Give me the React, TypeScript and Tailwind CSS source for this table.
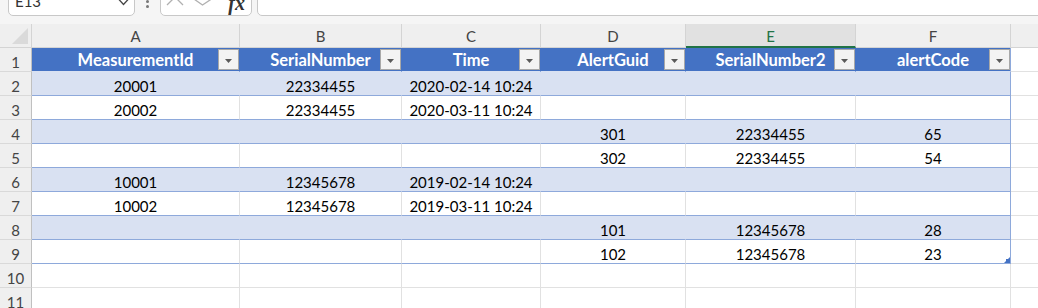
import React from 'react';

const rows: string[][] = [
  ['20001', '22334455', '2020-02-14 10:24', '', '', ''],
  ['20002', '22334455', '2020-03-11 10:24', '', '', ''],
  ['', '', '', '301', '22334455', '65'],
  ['', '', '', '302', '22334455', '54'],
  ['10001', '12345678', '2019-02-14 10:24', '', '', ''],
  ['10002', '12345678', '2019-03-11 10:24', '', '', ''],
  ['', '', '', '101', '12345678', '28'],
  ['', '', '', '102', '12345678', '23'],
];

const headers = ['MeasurementId', 'SerialNumber', 'Time', 'AlertGuid', 'SerialNumber2', 'alertCode'];
const letters = ['A', 'B', 'C', 'D', 'E', 'F'];

function FilterButton() {
  return (
    <div className="absolute right-0 top-[1px] flex h-[21px] w-[21px] items-center justify-center border border-[#a8a8a8] bg-[#f3f3f3]">
      <svg width="7" height="4" viewBox="0 0 7 4" className="mt-[2px]">
        <polygon points="0,0 7,0 3.5,4" fill="#5a5a5a" />
      </svg>
    </div>
  );
}

function RowHeader({ n }: { n: number }) {
  return (
    <div className="flex items-end justify-center border-b border-r border-b-[#d9d9d9] border-r-[#c0c0c0] bg-[#efefef] text-[15px] leading-[18px] text-[#444]">
      {n}
    </div>
  );
}

export default function App() {
  return (
    <div className="h-[308px] w-[1038px] overflow-hidden bg-white font-[family-name:Lato,sans-serif]">
      {/* formula bar */}
      <div className="flex h-[16px] items-end overflow-hidden bg-[#f5f5f5]">
        <div className="ml-[8px] flex h-[30px] w-[127px] shrink-0 items-end rounded-[5px] border border-[#c8c8c8] bg-white pb-[5px] pl-[6px] pr-[5px]">
          <span className="text-[15px] leading-[18px] text-[#333]">E13</span>
          <svg width="12" height="10" viewBox="0 0 12 10" overflow="visible" className="ml-auto">
            <polyline points="1.5,-1 6.5,4.5 11.5,-1" fill="none" stroke="#444" strokeWidth="1.3" />
          </svg>
        </div>
        <div className="mb-[8px] ml-[11px] flex shrink-0 flex-col gap-[2px]">
          <div className="h-[3px] w-[3px] rounded-full bg-[#777]" />
          <div className="h-[3px] w-[3px] rounded-full bg-[#777]" />
          <div className="h-[3px] w-[3px] rounded-full bg-[#777]" />
        </div>
        <div className="ml-[11px] flex h-[30px] w-[92px] shrink-0 items-end rounded-[5px] border border-[#c8c8c8] bg-white">
          <svg width="58" height="28" viewBox="0 0 58 28" className="shrink-0">
            <line x1="6" y1="2" x2="22" y2="18" stroke="#b0b0b0" strokeWidth="1.3" />
            <line x1="22" y1="2" x2="6" y2="18" stroke="#b0b0b0" strokeWidth="1.3" />
            <polyline points="31.5,11 41.5,18 52,11" fill="none" stroke="#b0b0b0" strokeWidth="1.3" />
          </svg>
          <span className="mb-[2px] ml-auto mr-[6px] font-[family-name:'Liberation_Serif',serif] text-[20px] font-bold italic leading-[20px] text-[#333]">
            fx
          </span>
        </div>
        <div className="-mr-[10px] ml-[5px] h-[30px] flex-1 rounded-[5px] border border-[#c8c8c8] bg-white" />
      </div>
      <div className="h-[8px] bg-[#f5f5f5]" />

      {/* grid */}
      <div className="grid auto-rows-[24px] grid-cols-[32px_208px_162px_139px_145px_170px_155px_1fr]">
        {/* column header row */}
        <div className="flex items-end justify-end border-b border-r border-[#d4d4d4] bg-[#efefef] pb-[3px] pr-[3px]">
          <svg width="16" height="16" viewBox="0 0 16 16">
            <polygon points="16,0 16,16 0,16" fill="#dadada" />
          </svg>
        </div>
        {letters.map((l) =>
          l === 'E' ? (
            <div
              key={l}
              className="flex items-center justify-center border-b-2 border-r border-b-[#217346] border-r-[#d4d4d4] bg-[#e1e1e1] pt-[1px] text-[15px] leading-[18px] text-[#217346]"
            >
              {l}
            </div>
          ) : (
            <div
              key={l}
              className="flex items-center justify-center border-b border-r border-[#d4d4d4] bg-[#efefef] text-[15px] leading-[18px] text-[#444]"
            >
              {l}
            </div>
          )
        )}
        <div className="border-b border-[#d4d4d4] bg-[#efefef]" />

        {/* row 1: table header */}
        <RowHeader n={1} />
        {headers.map((h, i) => (
          <div
            key={h}
            className={
              i === 5
                ? 'relative flex items-center justify-center whitespace-nowrap border-b border-r border-b-[#d9e1f2] border-r-[#8ea9db] bg-[#4472c4] text-[16.5px] font-bold leading-[18px] text-white'
                : 'relative flex items-center justify-center whitespace-nowrap border-b border-r border-b-[#d9e1f2] border-r-[#4472c4] bg-[#4472c4] text-[16.5px] font-bold leading-[18px] text-white'
            }
          >
            {h}
            <FilterButton />
          </div>
        ))}
        <div className="border-b border-[#e1e1e1] bg-white" />

        {/* data rows */}
        {rows.map((r, ri) => {
          const band = ri % 2 === 0;
          const last = ri === rows.length - 1;
          return (
            <React.Fragment key={ri}>
              <RowHeader n={ri + 2} />
              {r.map((v, ci) => {
                let cls: string;
                if (band) {
                  cls =
                    ci === 5
                      ? 'relative flex items-end justify-center whitespace-nowrap border-b border-r border-b-[#8ea9db] border-r-[#8ea9db] bg-[#d9e1f2] text-[15px] leading-[18px] text-black'
                      : 'relative flex items-end justify-center whitespace-nowrap border-b border-r border-b-[#8ea9db] border-r-[#d9e1f2] bg-[#d9e1f2] text-[15px] leading-[18px] text-black';
                } else {
                  cls =
                    ci === 5
                      ? 'relative flex items-end justify-center whitespace-nowrap border-b border-r border-b-[#8ea9db] border-r-[#8ea9db] bg-white text-[15px] leading-[18px] text-black'
                      : 'relative flex items-end justify-center whitespace-nowrap border-b border-r border-b-[#8ea9db] border-r-[#e1e1e1] bg-white text-[15px] leading-[18px] text-black';
                }
                return (
                  <div key={ci} className={cls}>
                    {v}
                    {last && ci === 5 && (
                      <svg width="6" height="6" viewBox="0 0 6 6" className="absolute bottom-0 right-0">
                        <polygon points="6,0 6,6 0,6" fill="#4472c4" />
                        <rect x="2" y="2" width="4" height="4" fill="#4472c4" />
                      </svg>
                    )}
                  </div>
                );
              })}
              <div className="border-b border-[#e1e1e1] bg-white" />
            </React.Fragment>
          );
        })}

        {/* empty rows */}
        {[10, 11].map((n) => (
          <React.Fragment key={n}>
            <RowHeader n={n} />
            {letters.map((l) => (
              <div key={l} className="border-b border-r border-[#e1e1e1] bg-white" />
            ))}
            <div className="border-b border-[#e1e1e1] bg-white" />
          </React.Fragment>
        ))}
      </div>
    </div>
  );
}
